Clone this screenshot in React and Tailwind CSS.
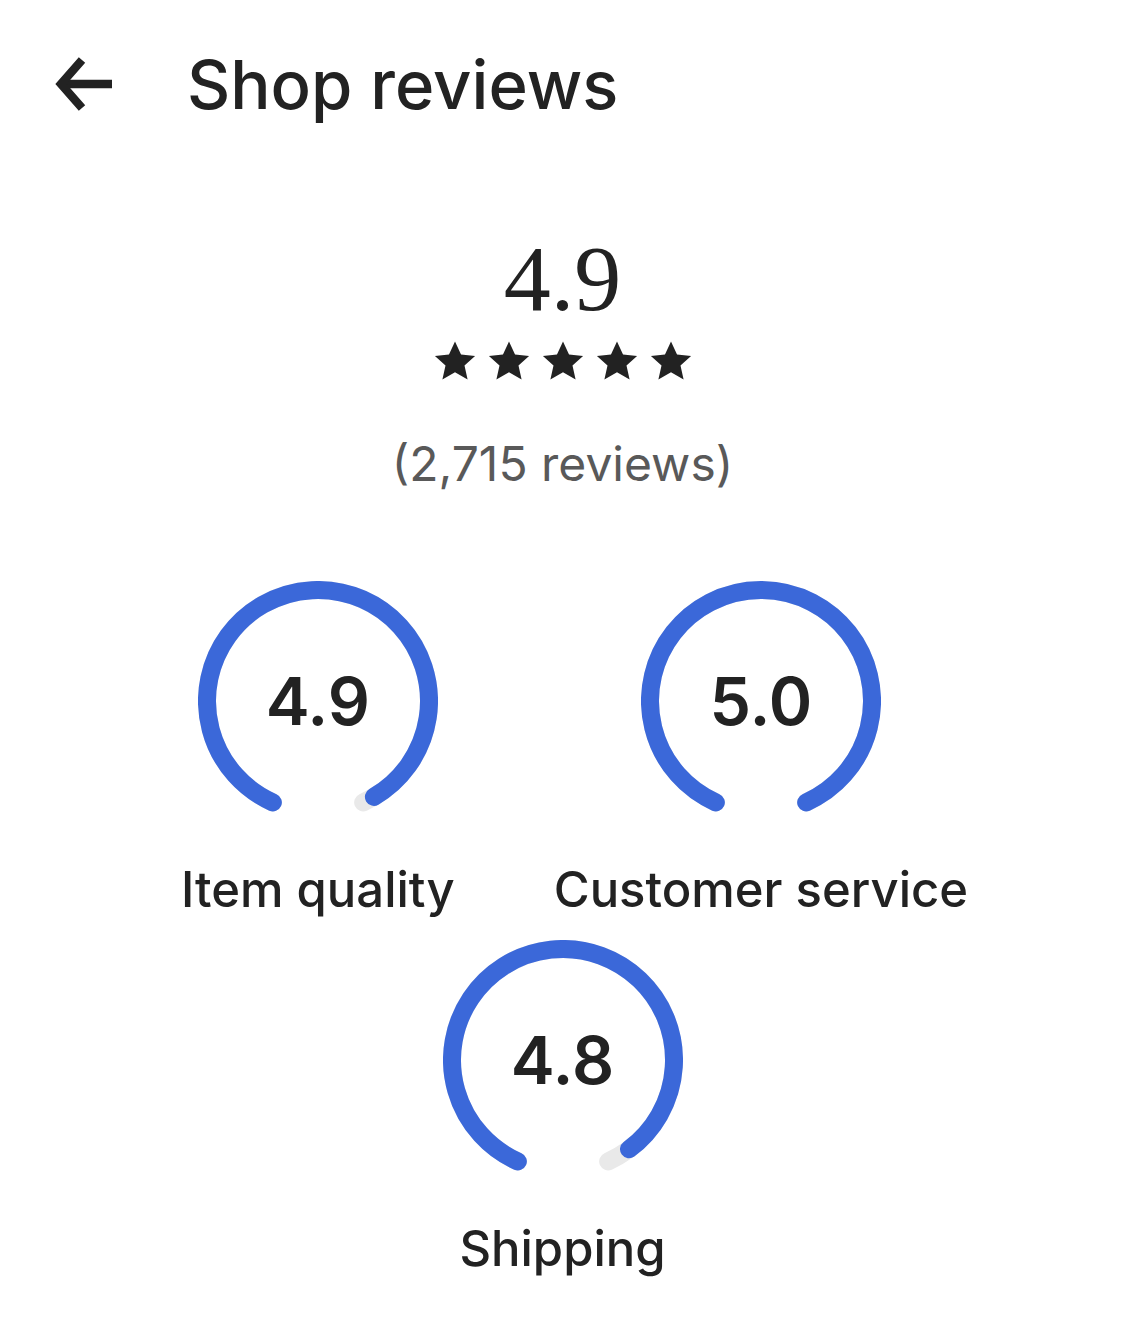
const BLUE = "#3b68d9";

const pt = (phi, r = 111, c = 120) => {
  const a = (phi * Math.PI) / 180;
  return [c - r * Math.sin(a), c + r * Math.cos(a)];
};

const arc = (from, to) => {
  const [x1, y1] = pt(from);
  const [x2, y2] = pt(to);
  const large = to - from > 180 ? 1 : 0;
  return `M ${x1} ${y1} A 111 111 0 ${large} 1 ${x2} ${y2}`;
};

const Gauge = ({ value, label }) => {
  const gap = 24;
  const span = 360 - gap * 2;
  const end = gap + span * (value / 5);
  return (
    <div className="flex flex-col items-center">
      <div className="relative w-[240px] h-[240px]">
        <svg width="240" height="240" viewBox="0 0 240 240" className="absolute inset-0">
          <path d={arc(gap, 360 - gap)} fill="none" stroke="#e9e9e9" strokeWidth="18" strokeLinecap="round" />
          <path d={arc(gap, end)} fill="none" stroke={BLUE} strokeWidth="18" strokeLinecap="round" />
        </svg>
        <div className="absolute inset-0 flex items-center justify-center text-[66px] font-semibold text-[#222222] leading-none">
          {value.toFixed(1)}
        </div>
      </div>
      <div className="mt-[44px] text-[49px] font-medium text-[#222222] leading-none whitespace-nowrap">
        {label}
      </div>
    </div>
  );
};

const Star = () => (
  <svg width="44" height="42" viewBox="0 0 24 23" fill="#222222">
    <path d="M12 0.8l3.3 7.2 7.7 0.8-5.8 5.2 1.7 7.6L12 17.7l-6.9 3.9 1.7-7.6L1 8.8l7.7-0.8z" />
  </svg>
);

const BackArrow = () => (
  <svg width="60" height="56" viewBox="0 0 60 56" fill="none" stroke="#222222" strokeWidth="8.5" strokeLinejoin="miter" strokeMiterlimit="10">
    <path d="M60 28H10" />
    <path d="M30 4L9 28l21 24" />
  </svg>
);

export default function App() {
  return (
    <div className="w-[1125px] h-[1336px] bg-white text-[#222222]" style={{ fontFamily: "Inter, 'Noto Sans', sans-serif" }}>
      <div className="flex items-center h-[168px] pl-[52px]">
        <BackArrow />
        <h1 className="ml-[75px] text-[67px] font-medium leading-none">Shop reviews</h1>
      </div>

      <div className="flex flex-col items-center">
        <div className="mt-[63px] text-[94px] leading-none" style={{ fontFamily: "'Liberation Serif', serif" }}>
          4.9
        </div>
        <div className="mt-[15px] flex gap-[10px]">
          <Star />
          <Star />
          <Star />
          <Star />
          <Star />
        </div>
        <div className="mt-[58px] text-[48px] text-[#595959] leading-none">(2,715 reviews)</div>
      </div>

      <div className="mt-[93px] flex justify-center gap-[99px] pl-[24px]">
        <Gauge value={4.9} label="Item quality" />
        <Gauge value={5.0} label="Customer service" />
      </div>
      <div className="mt-[26px] flex justify-center">
        <Gauge value={4.8} label="Shipping" />
      </div>
    </div>
  );
}
